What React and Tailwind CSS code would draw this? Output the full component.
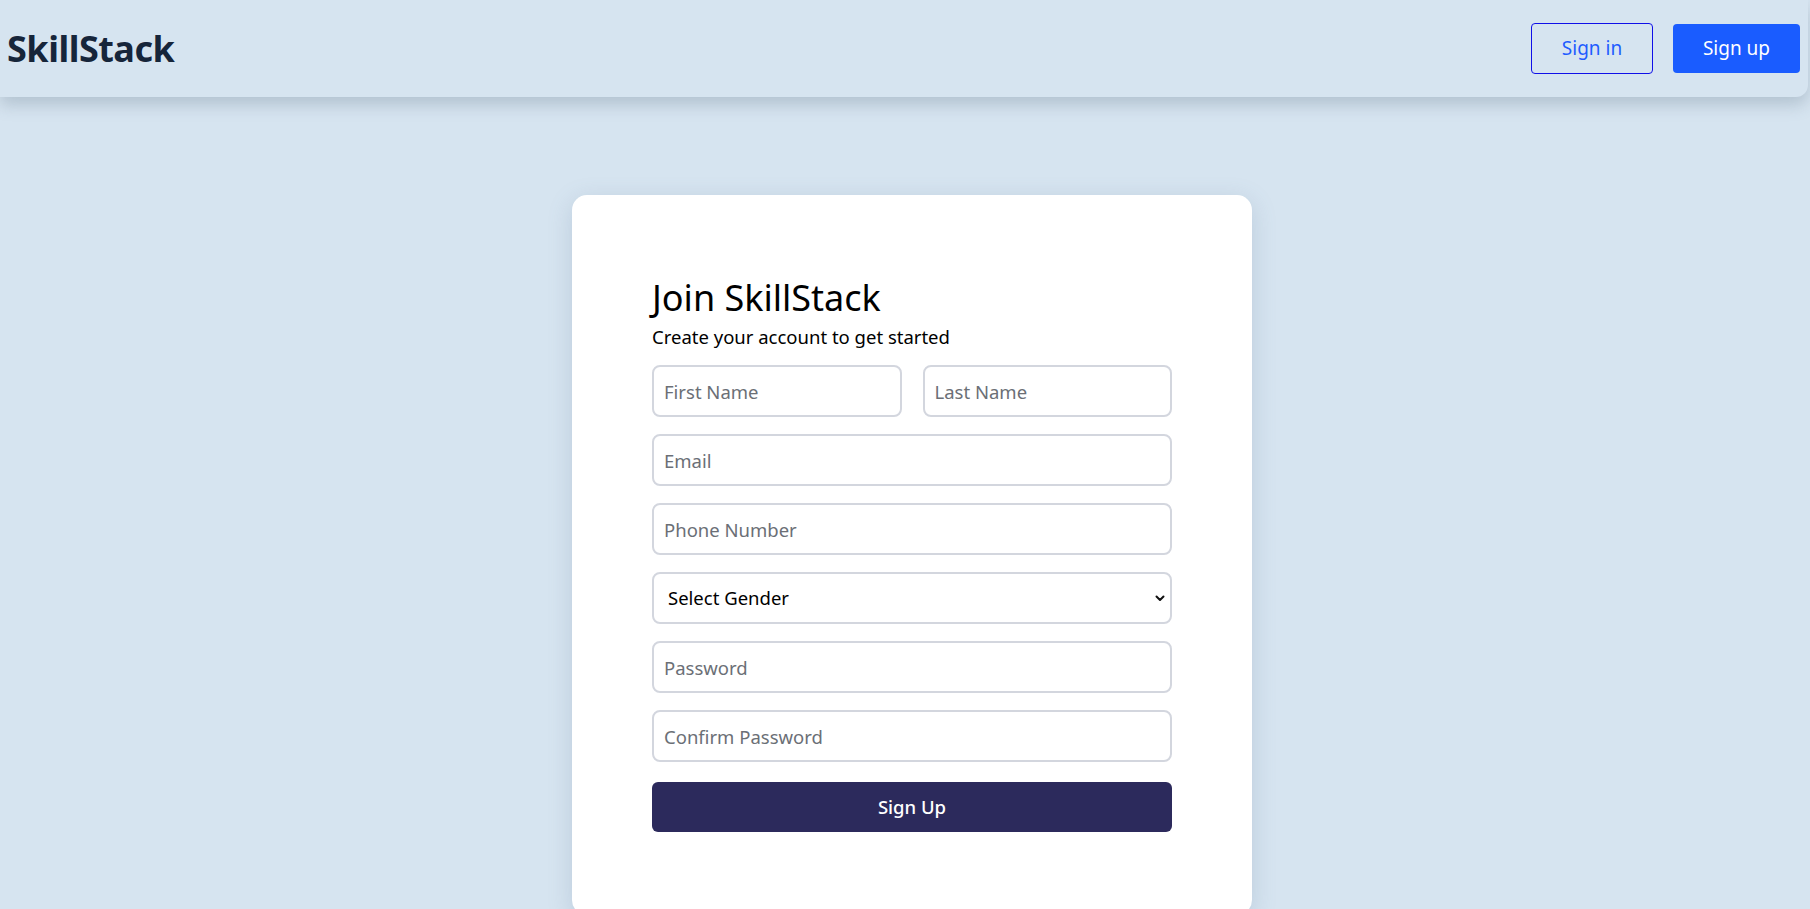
import { useState } from 'react'

const FIELDS_AFTER_NAME = [
  { name: 'email', type: 'email', placeholder: 'Email' },
  { name: 'phone', type: 'tel', placeholder: 'Phone Number' },
]

const PASSWORD_FIELDS = [
  { name: 'password', type: 'password', placeholder: 'Password' },
  { name: 'confirm', type: 'password', placeholder: 'Confirm Password' },
]

const inputClass =
  'h-[52px] w-full rounded-lg border-2 border-[#d3d6de] bg-white px-[10px] text-[18.5px] text-black placeholder:text-[#6b6f76] outline-none focus:border-[#9aa4c4]'

function Header() {
  return (
    <header className="relative z-10 flex h-[97px] w-[1808px] items-center justify-between rounded-br-xl bg-[#d6e4f0] pl-[7px] pr-[8px] shadow-[0_8px_16px_rgba(90,110,130,0.28)]">
      <span className="text-[36px] font-bold tracking-[-0.5px] text-[#16253a]">SkillStack</span>
      <div className="flex items-center gap-[20px]">
        <button
          type="button"
          className="h-[51px] w-[122px] rounded-[4px] border border-[#1010e8] text-[19px] text-[#1f5cff]"
        >
          Sign in
        </button>
        <button
          type="button"
          className="h-[49px] w-[127px] rounded-[4px] bg-[#1a5cff] text-[19px] text-white"
        >
          Sign up
        </button>
      </div>
    </header>
  )
}

function SignupCard() {
  const [gender, setGender] = useState('')

  return (
    <div className="h-[720px] w-[680px] rounded-[15px] bg-white px-[80px] pt-[79px] shadow-[0_6px_24px_rgba(90,120,150,0.22)]">
      <h1 className="text-[36px] leading-[48px] font-normal text-black">Join SkillStack</h1>
      <p className="mt-[3px] text-[18.5px] leading-[24px] text-black">Create your account to get started</p>

      <form className="mt-[16px] flex flex-col gap-[17px]" onSubmit={(e) => e.preventDefault()}>
        <div className="grid grid-cols-2 gap-[21px]">
          <input className={inputClass} name="first" placeholder="First Name" />
          <input className={inputClass} name="last" placeholder="Last Name" />
        </div>

        {FIELDS_AFTER_NAME.map((field) => (
          <input key={field.name} className={inputClass} {...field} />
        ))}

        <div className="relative">
          <select
            className="h-[52px] w-full appearance-none rounded-lg border-2 border-[#d3d6de] bg-white pl-[14px] text-[18.5px] text-black outline-none"
            value={gender}
            onChange={(e) => setGender(e.target.value)}
          >
            <option value="">Select Gender</option>
            <option value="male">Male</option>
            <option value="female">Female</option>
            <option value="other">Other</option>
          </select>
          <svg
            className="pointer-events-none absolute right-[6px] top-1/2 size-[12px] -translate-y-1/2"
            viewBox="0 0 12 12"
            fill="none"
            stroke="#111"
            strokeWidth="2"
            strokeLinecap="round"
            strokeLinejoin="round"
          >
            <path d="M2.5 4.5 6 8l3.5-3.5" />
          </svg>
        </div>

        {PASSWORD_FIELDS.map((field) => (
          <input key={field.name} className={inputClass} {...field} />
        ))}

        <button
          type="submit"
          className="mt-[3px] h-[50px] w-full rounded-md bg-[#2c2a5c] text-[18.5px] font-medium text-white"
        >
          Sign Up
        </button>
      </form>
    </div>
  )
}

export default function App() {
  return (
    <div className="h-[909px] overflow-hidden bg-[#d6e4f0] font-['Noto_Sans','Open_Sans',sans-serif]">
      <Header />
      <main className="flex justify-center pl-[14px] pt-[98px]">
        <SignupCard />
      </main>
    </div>
  )
}
